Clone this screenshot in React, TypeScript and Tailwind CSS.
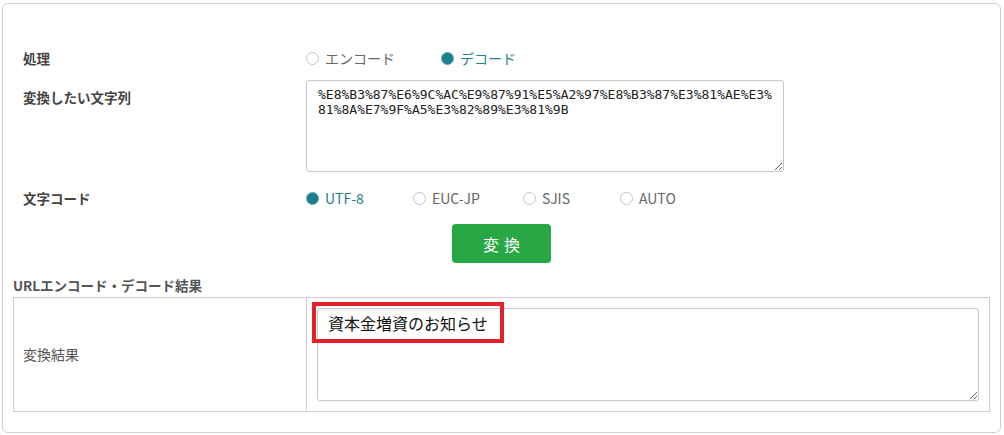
import { useState } from "react";

const jp = "font-['Noto_Sans_CJK_JP','Noto_Sans',sans-serif]";

const Radio = ({ label, checked, width }: { label: string; checked: boolean; width: string }) => (
  <label className={`flex items-center gap-[6px] ${width}`}>
    {checked ? (
      <span className="w-[13px] h-[13px] rounded-full bg-[#1c7f8e] border border-[#5aa5b0]" />
    ) : (
      <span className="w-[13px] h-[13px] rounded-full bg-white border border-[#c4c4c4]" />
    )}
    <span className={`text-[14px] ${checked ? "text-[#23808f]" : "text-[#666]"}`}>{label}</span>
  </label>
);

const encoded =
  "%E8%B3%87%E6%9C%AC%E9%87%91%E5%A2%97%E8%B3%87%E3%81%AE%E3%81%8A%E7%9F%A5%E3%82%89%E3%81%9B";

export default function App() {
  const [src, setSrc] = useState(encoded);

  return (
    <div className={`w-[1004px] h-[435px] bg-white pt-[3px] pl-[2px] ${jp}`}>
      <div className="w-[999px] h-[430px] border border-[#cfcfcf] rounded-[6px] bg-white">
        {/* Form */}
        <div className="pl-[20px]">
          <div className="flex items-center h-[20px] mt-[44px]">
            <div className="w-[283px] text-[13.5px] font-bold text-[#444]">処理</div>
            <Radio label="エンコード" checked={false} width="w-[135px]" />
            <Radio label="デコード" checked width="w-[120px]" />
          </div>

          <div className="flex mt-[12px]">
            <div className="w-[283px] pt-[7px] text-[13.5px] font-bold text-[#444]">変換したい文字列</div>
            <textarea
              value={src}
              onChange={(e) => setSrc(e.target.value)}
              className="w-[478px] h-[92px] border border-[#c8c8c8] rounded-[3px] pl-[11px] pr-[4px] pt-[6px] text-[13px] leading-[15px] text-[#222] font-['DejaVu_Sans_Mono',monospace] break-all overflow-hidden outline-none resize-y"
            />
          </div>

          <div className="flex items-center h-[20px] mt-[16px]">
            <div className="w-[283px] text-[13.5px] font-bold text-[#444]">文字コード</div>
            <Radio label="UTF-8" checked width="w-[107px]" />
            <Radio label="EUC-JP" checked={false} width="w-[110px]" />
            <Radio label="SJIS" checked={false} width="w-[97px]" />
            <Radio label="AUTO" checked={false} width="w-[80px]" />
          </div>
        </div>

        <div className="flex justify-center mt-[16px]">
          <button className="w-[99px] h-[39px] rounded-[4px] bg-[#28a745] text-white text-[16px] tracking-[5px] pl-[5px]">
            変換
          </button>
        </div>

        {/* Result */}
        <div className="mt-[13px] pl-[10px] h-[18px] flex items-center text-[13.5px] font-bold text-[#555]">
          URLエンコード・デコード結果
        </div>
        <div className="mx-[10px] mt-[3px] h-[115px] border border-[#cfcfcf] flex">
          <div className="w-[293px] border-r border-[#cfcfcf] flex items-center pl-[9px] text-[14px] text-[#555]">
            変換結果
          </div>
          <div className="relative flex-1 p-[10px]">
            <textarea
              readOnly
              value="資本金増資のお知らせ"
              className="w-full h-[93px] border border-[#c8c8c8] rounded-[3px] px-[10px] pt-[3px] text-[16px] leading-[22px] text-[#111] outline-none"
            />
            <div className="absolute left-[5px] top-[4px] w-[192px] h-[41px] border-4 border-[#e3202b] pointer-events-none" />
          </div>
        </div>
      </div>
    </div>
  );
}
